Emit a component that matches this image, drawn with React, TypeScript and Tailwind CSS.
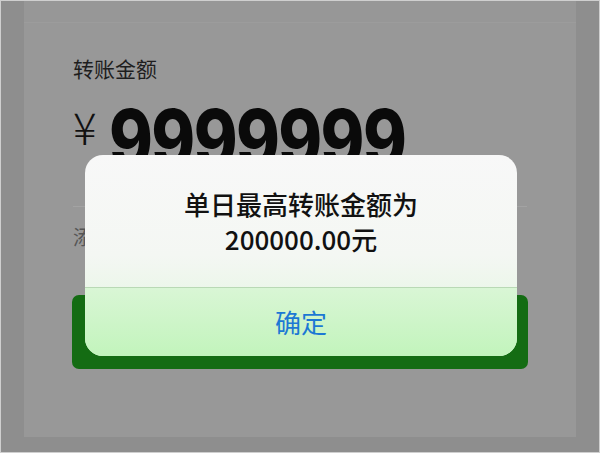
import React from "react";

export default function App() {
  return (
    <div className="relative w-[600px] h-[453px] overflow-hidden bg-[#8e8e8e] border-[1px] border-[#cfcfcf]" style={{ fontFamily: '"Noto Sans CJK SC", "Noto Sans", sans-serif' }}>
      <div className="mx-[23px] h-[436px] bg-[#989898] flex flex-col">
        <div className="h-[22px] border-b border-[#9c9c9c] bg-[#979797]" />
        <div className="pl-[49px] pr-[49px] flex flex-col">
          <div className="mt-[31px] text-[21px] leading-[28px] text-[#1e1e1e]">转账金额</div>
          <div className="mt-[20px] flex items-start h-[80px]">
            <span className="text-[44px] leading-[50px] font-light text-[#111] mt-[-1px]">¥</span>
            <span
              className="ml-[12px] mt-[5px] inline-block origin-left scale-x-[0.81] text-[82px] leading-[66px] font-extrabold text-[#0a0a0a] tracking-[-2px]"
              style={{ fontFamily: 'Inter, "Liberation Sans", sans-serif' }}
            >
              9999999
            </span>
          </div>
          <div className="mt-[24px] h-px bg-[#a3a3a3]" />
          <div className="mt-[16px] text-[20px] leading-[28px] text-[#555]">添加转账说明</div>
          <div className="mt-[44px] h-[74px] rounded-[7px] bg-[#146c13] -mx-[1px]" />
        </div>
      </div>

      <div className="absolute left-[84px] top-[154px] w-[432px] h-[201px] rounded-[18px] overflow-hidden flex flex-col bg-gradient-to-b from-[#f8f8f8] via-[#f4f7f3] to-[#dcf5d8]">
        <div className="h-[132px] flex flex-col items-center justify-center text-[#111] text-[26px] leading-[35px] font-medium">
          <div>单日最高转账金额为</div>
          <div>200000.00元</div>
        </div>
        <div className="h-px bg-[#b9d9b5]" />
        <div className="flex-1 flex items-center justify-center bg-gradient-to-b from-[#d9f6d5] to-[#c2f4bc] text-[#1c78d4] text-[26px] leading-[36px]">
          确定
        </div>
      </div>
    </div>
  );
}
